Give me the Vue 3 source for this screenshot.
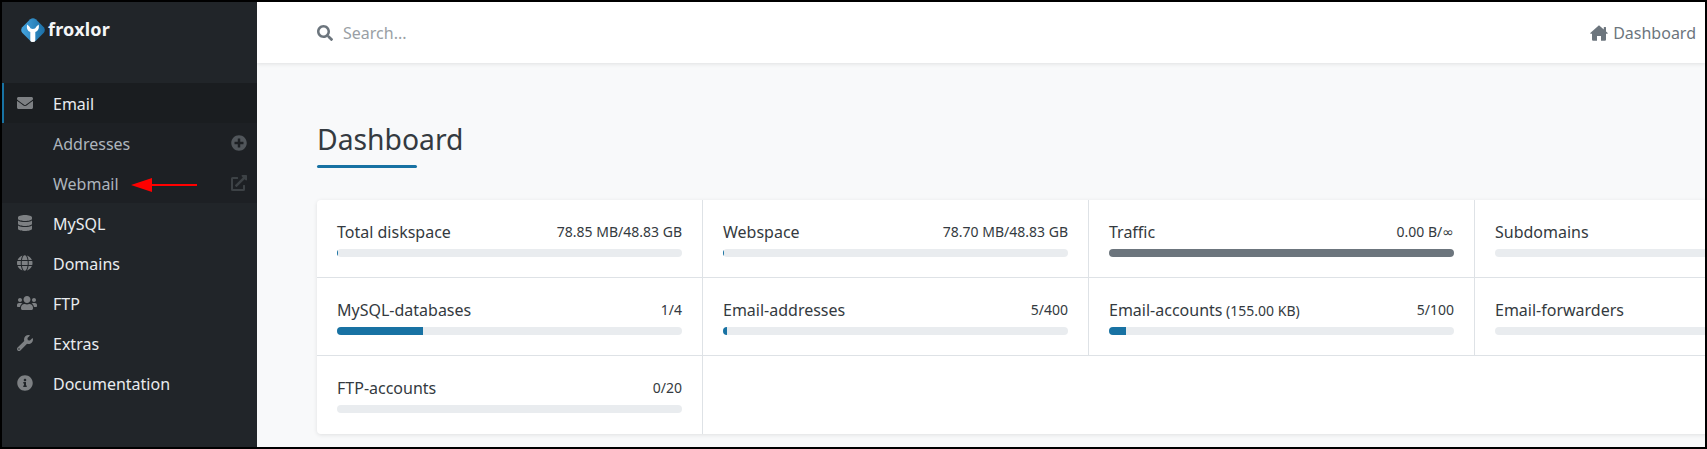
<script setup>
const icons = {
  envelope: { w: 512, d: 'M502.3 190.8c3.9-3.1 9.7-.2 9.7 4.7V400c0 26.5-21.5 48-48 48H48c-26.5 0-48-21.5-48-48V195.6c0-5 5.7-7.8 9.7-4.7 22.4 17.4 52.1 39.5 154.1 113.6 21.1 15.4 56.7 47.8 92.2 47.6 35.7.3 72-32.8 92.3-47.6 102-74.1 131.6-96.3 154-113.7zM256 320c23.2.4 56.6-29.2 73.4-41.4 132.7-96.3 142.8-104.7 173.4-128.7 5.8-4.5 9.2-11.5 9.2-18.9v-19c0-26.5-21.5-48-48-48H48C21.5 64 0 85.5 0 112v19c0 7.4 3.4 14.3 9.2 18.9 30.6 23.9 40.7 32.4 173.4 128.7 16.8 12.2 50.2 41.8 73.4 41.4z' },
  plus: { w: 512, d: 'M256 8C119 8 8 119 8 256s111 248 248 248 248-111 248-248S393 8 256 8zm144 276c0 6.6-5.4 12-12 12h-92v92c0 6.6-5.4 12-12 12h-56c-6.6 0-12-5.4-12-12v-92h-92c-6.6 0-12-5.4-12-12v-56c0-6.6 5.4-12 12-12h92v-92c0-6.6 5.4-12 12-12h56c6.6 0 12 5.4 12 12v92h92c6.6 0 12 5.4 12 12v56z' },
  external: { w: 512, d: 'M432,320H400a16,16,0,0,0-16,16V448H64V128H208a16,16,0,0,0,16-16V80a16,16,0,0,0-16-16H48A48,48,0,0,0,0,112V464a48,48,0,0,0,48,48H400a48,48,0,0,0,48-48V336A16,16,0,0,0,432,320ZM488,0h-128c-21.37,0-32.05,25.91-17,41l35.73,35.73L135,320.37a24,24,0,0,0,0,34L157.67,377a24,24,0,0,0,34,0L435.28,133.32,471,169c15,15,41,4.5,41-17V24A24,24,0,0,0,488,0Z' },
  database: { w: 448, d: 'M448 73.143v45.714C448 159.143 347.667 192 224 192S0 159.143 0 118.857V73.143C0 32.857 100.333 0 224 0s224 32.857 224 73.143zM448 176v102.857C448 319.143 347.667 352 224 352S0 319.143 0 278.857V176c48.125 33.143 136.208 48.572 224 48.572S399.874 209.143 448 176zm0 160v102.857C448 479.143 347.667 512 224 512S0 479.143 0 438.857V336c48.125 33.143 136.208 48.572 224 48.572S399.874 369.143 448 336z' },
  globe: { w: 496, d: 'M336.5 160C322 70.7 287.8 8 248 8s-74 62.7-88.5 152h177zM152 256c0 22.2 1.2 43.5 3.3 64h185.3c2.1-20.5 3.3-41.8 3.3-64s-1.2-43.5-3.3-64H155.3c-2.1 20.5-3.3 41.8-3.3 64zm324.7-96c-28.6-67.9-86.5-120.4-158-141.6 24.4 33.8 41.2 84.7 50 141.6h108zM177.2 18.4C105.8 39.6 47.8 92.1 19.3 160h108c8.7-56.9 25.5-107.8 49.9-141.6zM487.4 192H372.7c2.1 21 3.3 42.5 3.3 64s-1.2 43-3.3 64h114.6c5.5-20.5 8.6-41.8 8.6-64s-3.1-43.5-8.5-64zM120 256c0-21.5 1.2-43 3.3-64H8.6C3.2 212.5 0 233.8 0 256s3.2 43.5 8.6 64h114.6c-2-21-3.2-42.5-3.2-64zm39.5 96c14.5 89.3 48.7 152 88.5 152s74-62.7 88.5-152h-177zm159.3 141.6c71.4-21.2 129.4-73.7 158-141.6h-108c-8.8 56.9-25.6 107.8-50 141.6zM19.3 352c28.6 67.9 86.5 120.4 158 141.6-24.4-33.8-41.2-84.7-50-141.6h-108z' },
  users: { w: 640, d: 'M96 224c35.3 0 64-28.7 64-64s-28.7-64-64-64-64 28.7-64 64 28.7 64 64 64zm448 0c35.3 0 64-28.7 64-64s-28.7-64-64-64-64 28.7-64 64 28.7 64 64 64zm32 32h-64c-17.6 0-33.5 7.1-45.1 18.6 40.3 22.1 68.9 62 75.1 109.4h66c17.7 0 32-14.3 32-32v-32c0-35.3-28.7-64-64-64zm-256 0c61.9 0 112-50.1 112-112S381.9 32 320 32 208 82.1 208 144s50.1 112 112 112zm76.8 32h-8.3c-20.8 10-43.9 16-68.5 16s-47.6-6-68.5-16h-8.3C179.6 288 128 339.6 128 403.2V432c0 26.5 21.5 48 48 48h288c26.5 0 48-21.5 48-48v-28.8c0-63.6-51.6-115.2-115.2-115.2zm-223.7-13.4C161.5 263.1 145.6 256 128 256H64c-35.3 0-64 28.7-64 64v32c0 17.7 14.3 32 32 32h65.9c6.3-47.4 34.9-87.3 75.2-109.4z' },
  wrench: { w: 512, d: 'M507.73 109.1c-2.24-9.03-13.54-12.09-20.12-5.51l-74.36 74.36-67.88-11.31-11.31-67.88 74.36-74.36c6.62-6.62 3.43-17.9-5.66-20.16-47.38-11.74-99.55.91-136.58 37.93-39.64 39.64-50.55 97.1-34.05 147.2L18.74 402.76c-24.99 24.99-24.99 65.51 0 90.5 24.99 24.99 65.51 24.99 90.5 0l213.21-213.21c50.12 16.71 107.47 5.68 147.37-34.22 37.07-37.07 49.7-89.32 37.91-136.73zM64 472c-13.25 0-24-10.75-24-24 0-13.26 10.75-24 24-24s24 10.74 24 24c0 13.25-10.75 24-24 24z' },
  info: { w: 512, d: 'M256 8C119.043 8 8 119.083 8 256c0 136.997 111.043 248 248 248s248-111.003 248-248C504 119.083 392.957 8 256 8zm0 110c23.196 0 42 18.804 42 42s-18.804 42-42 42-42-18.804-42-42 18.804-42 42-42zm56 254c0 6.627-5.373 12-12 12h-88c-6.627 0-12-5.373-12-12v-24c0-6.627 5.373-12 12-12h12v-64h-12c-6.627 0-12-5.373-12-12v-24c0-6.627 5.373-12 12-12h64c6.627 0 12 5.373 12 12v100h12c6.627 0 12 5.373 12 12v24z' },
  search: { w: 512, d: 'M505 442.7L405.3 343c-4.5-4.5-10.6-7-17-7H372c27.6-35.3 44-79.7 44-128C416 93.1 322.9 0 208 0S0 93.1 0 208s93.1 208 208 208c48.3 0 92.7-16.4 128-44v16.3c0 6.4 2.5 12.5 7 17l99.7 99.7c9.4 9.4 24.6 9.4 33.9 0l28.3-28.3c9.4-9.4 9.4-24.6.1-34zM208 336c-70.7 0-128-57.2-128-128 0-70.7 57.2-128 128-128 70.7 0 128 57.2 128 128 0 70.7-57.2 128-128 128z' },
  home: { w: 576, d: 'M288 10 L440 142 V80 Q440 64 456 64 H496 Q512 64 512 80 V204 L568 252 Q584 284 545 282 H512 V464 Q512 506 476 506 H352 V350 H224 V506 H100 Q64 506 64 464 V282 H31 Q-8 284 8 252 Z' },
}

const lower = [
  { label: 'MySQL', icon: 'database' },
  { label: 'Domains', icon: 'globe' },
  { label: 'FTP', icon: 'users' },
  { label: 'Extras', icon: 'wrench' },
  { label: 'Documentation', icon: 'info' },
]

const stats = [
  { label: 'Total diskspace', value: '78.85 MB/48.83 GB', pct: 0.16 },
  { label: 'Webspace', value: '78.70 MB/48.83 GB', pct: 0.16 },
  { label: 'Traffic', value: '0.00 B/', unlimited: true, pct: 100, gray: true },
  { label: 'Subdomains', value: '', pct: 0 },
  { label: 'MySQL-databases', value: '1/4', pct: 25 },
  { label: 'Email-addresses', value: '5/400', pct: 1.25 },
  { label: 'Email-accounts', small: '(155.00 KB)', value: '5/100', pct: 5 },
  { label: 'Email-forwarders', value: '', pct: 0 },
  { label: 'FTP-accounts', value: '0/20', pct: 0 },
]
</script>

<template>
  <div class="frame">
    <aside class="sidebar">
      <div class="brand">
        <svg class="logo" viewBox="0 0 24 24" width="24" height="24">
          <defs>
            <linearGradient id="logoBlue" x1="0" y1="0" x2="1" y2="0">
              <stop offset="0" stop-color="#45a5e0" />
              <stop offset="1" stop-color="#1b6fa6" />
            </linearGradient>
          </defs>
          <path fill="url(#logoBlue)" d="M9.2 1.2 Q12 -0.8 14.8 1.2 L22.8 9.2 Q24.8 12 22.8 14.8 L14.8 22.8 Q12 24.8 9.2 22.8 L1.2 14.8 Q-0.8 12 1.2 9.2 Z" />
          <path fill="#fff" d="M6.2 6.5 C5.2 10 6.5 13 9.3 14 L9.3 22.5 Q9.3 24 11.8 24 Q14.3 24 14.3 22.5 L14.3 14 C17.3 13 18.5 10 17.6 6.5 L15 9 C14.8 11.5 9 11.5 8.8 9 Z" />
        </svg>
        <span class="brand-name">froxlor</span>
      </div>

      <nav>
        <div class="nav-row active">
          <span class="nav-icon"><svg :viewBox="`0 0 ${icons.envelope.w} 512`" height="16"><path :d="icons.envelope.d" /></svg></span>
          <span class="nav-text">Email</span>
        </div>
        <div class="sub">
          <div class="sub-row">
            <span class="nav-text">Addresses</span>
            <svg class="plus" viewBox="0 0 512 512" width="16" height="16"><path :d="icons.plus.d" /></svg>
          </div>
          <div class="sub-row">
            <span class="nav-text">Webmail</span>
            <svg class="ext" viewBox="0 0 512 512" width="16" height="16"><path :d="icons.external.d" /></svg>
            <svg class="arrow" width="68" height="16" viewBox="0 0 68 16">
              <path d="M0 8 L21 1 L21 7 L66 7 L66 9 L21 9 L21 15 Z" fill="#f00" />
            </svg>
          </div>
        </div>
        <div v-for="item in lower" :key="item.label" class="nav-row">
          <span class="nav-icon" :class="item.icon">
            <svg :viewBox="`0 0 ${icons[item.icon].w} 512`" height="16"><path :d="icons[item.icon].d" /></svg>
          </span>
          <span class="nav-text">{{ item.label }}</span>
        </div>
      </nav>
    </aside>

    <main class="main">
      <header class="topbar">
        <div class="search">
          <svg viewBox="0 0 512 512" width="16" height="16"><path :d="icons.search.d" /></svg>
          <span>Search...</span>
        </div>
        <div class="crumb">
          <svg viewBox="0 0 576 512" width="18" height="16"><path :d="icons.home.d" /></svg>
          <span>Dashboard</span>
        </div>
      </header>

      <section class="content">
        <h1 class="title">Dashboard</h1>
        <div class="rule"></div>
        <div class="card">
          <div v-for="s in stats" :key="s.label" class="cell">
            <div class="cell-head">
              <span class="label">{{ s.label }}<small v-if="s.small">&nbsp;{{ s.small }}</small></span>
              <span class="value">{{ s.value }}<span v-if="s.unlimited" class="inf">∞</span></span>
            </div>
            <div class="track">
              <div class="fill" :class="{ gray: s.gray }" :style="{ width: s.pct + '%' }"></div>
            </div>
          </div>
        </div>
      </section>
    </main>
  </div>
</template>

<style>
html, body { margin: 0; padding: 0; overflow: hidden; }
</style>

<style scoped>
.frame {
  box-sizing: border-box;
  width: 1707px;
  height: 449px;
  border: 2px solid #000;
  display: flex;
  overflow: hidden;
  font-family: "Noto Sans", "Open Sans", sans-serif;
  font-size: 16px;
  color: #343a40;
  background: #f8f9fa;
}
.sidebar {
  flex: 0 0 255px;
  background: #212529;
  color: #e9ecef;
}
.brand {
  height: 81px;
  box-sizing: border-box;
  padding: 16px 0 0 19px;
  display: flex;
  align-items: flex-start;
  gap: 3px;
}
.logo { flex: none; }
.brand-name {
  font-weight: 700;
  font-size: 18px;
  line-height: 22px;
  color: #f4f6f7;
  letter-spacing: 0.2px;
}
.nav-row {
  height: 40px;
  box-sizing: border-box;
  border-left: 2px solid transparent;
  padding-left: 13px;
  display: flex;
  align-items: center;
}
.nav-row.active {
  background: #1a1d20;
  border-left-color: #1872a3;
}
.nav-text { padding-top: 2px; }
.nav-icon {
  flex: 0 0 36px;
  display: flex;
  align-items: center;
  fill: #7d8083;
}
.nav-icon.database { padding-left: 1px; box-sizing: border-box; }
.sub { background: #1d2024; }
.sub-row {
  height: 40px;
  position: relative;
  padding: 0 10px 0 51px;
  box-sizing: border-box;
  display: flex;
  align-items: center;
  justify-content: space-between;
  color: #adb5bd;
}
.plus { fill: #51565b; }
.ext { fill: #3d4246; }
.arrow {
  position: absolute;
  left: 129px;
  top: 14px;
}
.main {
  flex: 1;
  min-width: 0;
  display: flex;
  flex-direction: column;
  overflow: hidden;
}
.topbar {
  flex: 0 0 61px;
  background: #fff;
  box-shadow: 0 1px 4px rgba(0, 0, 0, 0.1);
  padding: 0 9px 0 60px;
  display: flex;
  align-items: center;
  justify-content: space-between;
  position: relative;
}
.search {
  display: flex;
  align-items: center;
  gap: 10px;
  color: #9a9fa5;
  fill: #6c757d;
}
.crumb {
  display: flex;
  align-items: center;
  gap: 5px;
  color: #6c757d;
  fill: #6c757d;
}
.content { padding: 0 0 0 60px; }
.title {
  margin: 0;
  padding-top: 59px;
  font-size: 28.3px;
  line-height: 34px;
  font-weight: 400;
  color: #343a40;
}
.rule {
  width: 100px;
  height: 3px;
  margin-top: 9px;
  margin-bottom: 32px;
  background: #1872a3;
  border-radius: 2px;
}
.card {
  display: grid;
  grid-template-columns: repeat(4, 386px);
  width: 1544px;
  background: #fff;
  border-radius: 4px;
  box-shadow: 0 1px 4px rgba(0, 0, 0, 0.1);
}
.cell {
  box-sizing: border-box;
  height: 78px;
  padding: 20px;
  border-right: 1px solid #dee2e6;
  border-bottom: 1px solid #dee2e6;
}
.cell:last-child { border-bottom: 0; }
.cell-head {
  height: 24px;
  margin-bottom: 5px;
  display: flex;
  justify-content: space-between;
  align-items: center;
  line-height: 24px;
}
.label small { font-size: 14px; }
.value { font-size: 14px; }
.inf { font-family: "DejaVu Sans", sans-serif; }
.track {
  height: 8px;
  background: #e9ecef;
  border-radius: 4px;
  overflow: hidden;
}
.fill { height: 100%; background: #1872a3; }
.fill.gray { background: #6c757d; }
</style>
